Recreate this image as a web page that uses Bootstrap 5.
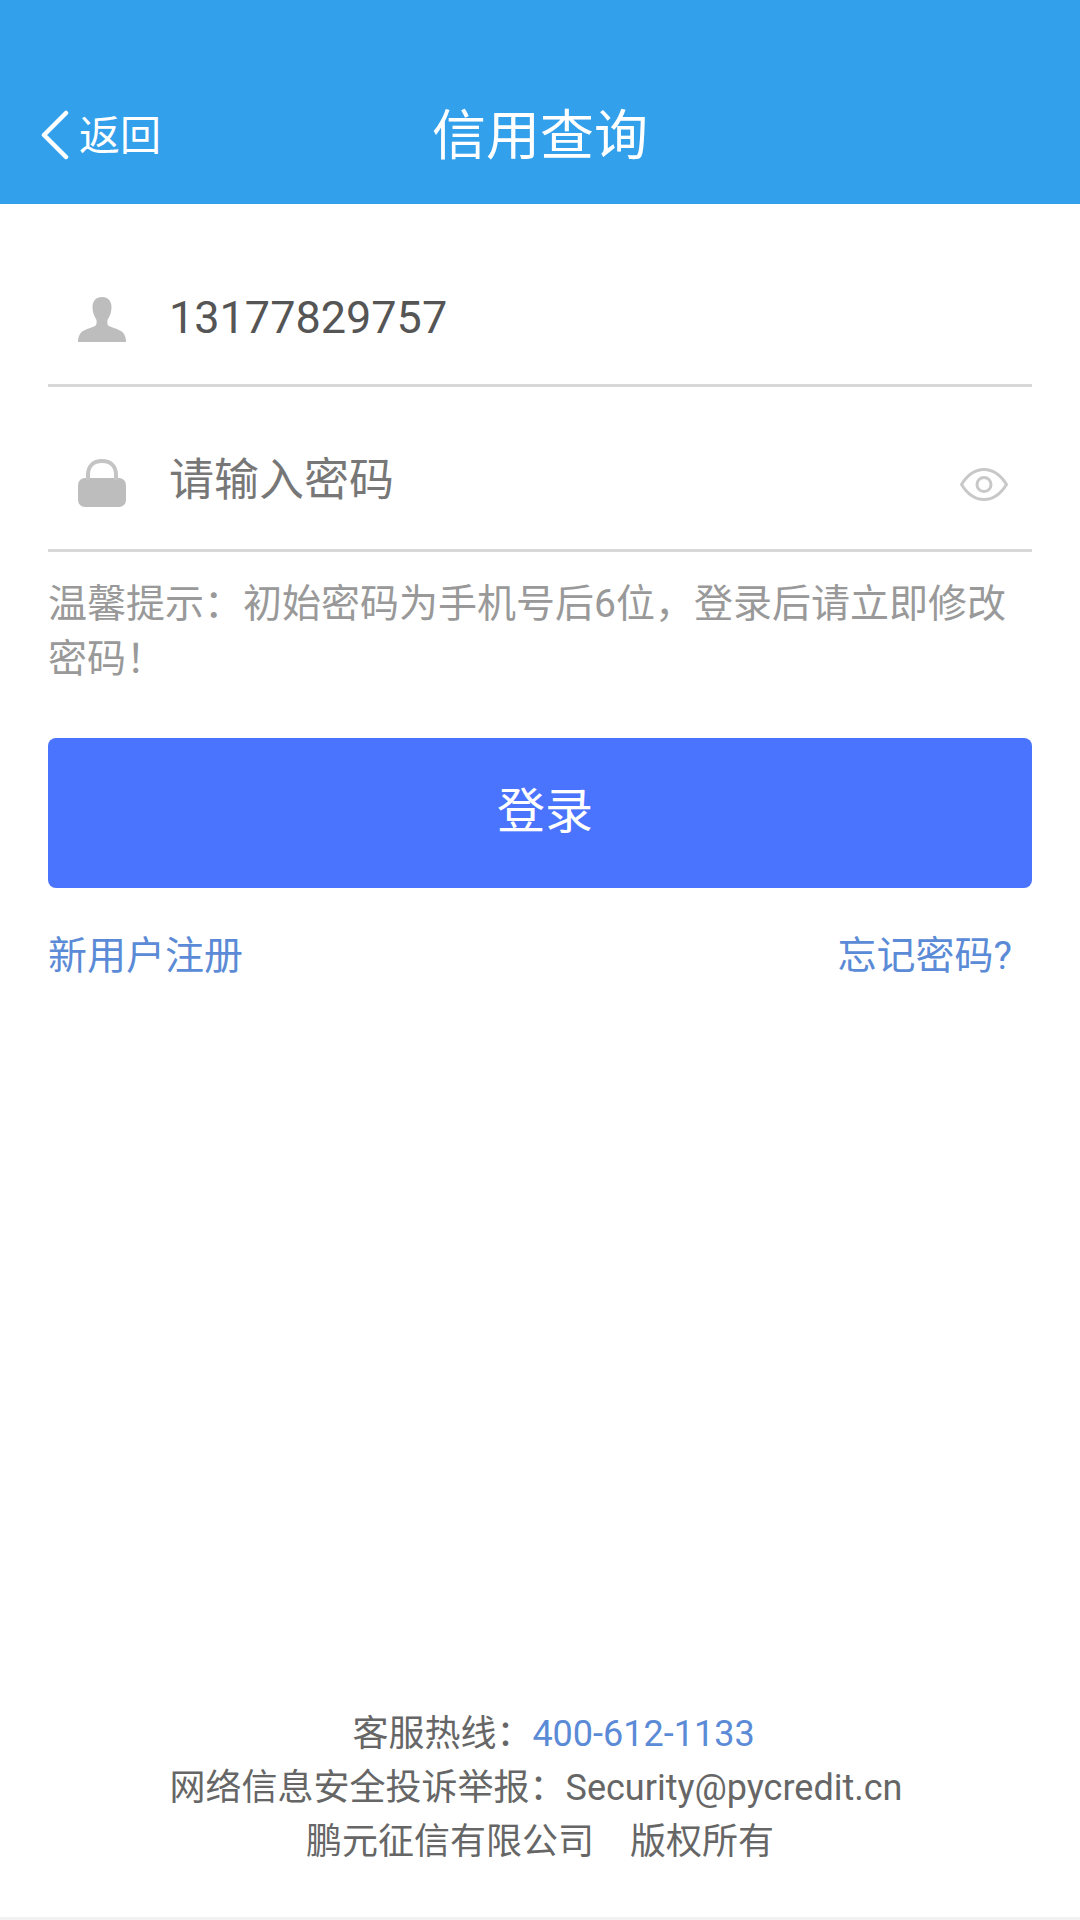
<!DOCTYPE html>
<html lang="zh-CN">
<head>
  <meta charset="UTF-8" />
  <meta name="viewport" content="width=device-width, initial-scale=1.0"/>
  <title>信用查询</title>
  <link href="https://cdn.jsdelivr.net/npm/bootstrap@5.3.0/dist/css/bootstrap.min.css" rel="stylesheet" />
  <style>
    html, body { height: 100%; }
    body {
      font-family: Roboto, "Noto Sans CJK SC", sans-serif;
      background: #fff;
      border-bottom: 3px solid #f2f2f2;
    }
    .page-wrap { height: 1917px; }
    .top-bar {
      height: 204px;
      padding-top: 98px;
      background: #33a0ec;
      color: #fff;
    }
    .back-link { left: 41px; top: 109px; gap: 10px; font-size: 41px; line-height: 50px; color: #fff; }
    .back-link span { padding-top: 2px; }
    .top-title { font-size: 54px; line-height: 78px; font-weight: 400; margin: 0; }
    .login-form { padding: 0 48px; }
    .field-row { border-bottom: 3px solid #d8d8d8; }
    .field-user { height: 121px; margin-top: 62px; padding-bottom: 15px; }
    .field-pass { height: 165px; padding-top: 26px; }
    .field-icon { width: 48px; margin: 4px 0 0 30px; flex: none; }
    .field-input {
      border: 0;
      border-radius: 0;
      padding: 0;
      margin-left: 43px;
      font-size: 45px;
      line-height: 60px;
      color: #555;
      background: transparent;
      box-shadow: none;
    }
    .field-input::placeholder { color: #777; opacity: 1; }
    .eye-icon { margin: 7px 24px 0 0; flex: none; }
    .hint-text { margin: 25px 0 0; font-size: 39px; line-height: 55px; color: #999; }
    .login-btn {
      display: block;
      width: 100%;
      height: 150px;
      margin-top: 51px;
      padding: 0 0 3px 10px;
      font-size: 48px;
      color: #fff;
      background: #4a74fd;
      border: 0;
      border-radius: 8px;
    }
    .form-links { margin-top: 40px; padding-right: 20px; font-size: 39px; line-height: 56px; }
    .form-links a, .hotline { color: #5b8ad6; text-decoration: none; }
    .page-foot { padding-bottom: 48px; font-size: 36px; line-height: 54px; color: #666; }
    .foot-hotline { padding-left: 27px; }
    .foot-report { padding-right: 8px; }
  </style>
</head>
<body>
  <div class="page-wrap d-flex flex-column">
    <header class="top-bar position-relative text-center">
      <a href="#" class="back-link position-absolute d-flex align-items-center text-decoration-none">
        <svg width="28" height="50" viewBox="0 0 28 50" fill="none" stroke="#fff" stroke-width="4.500" stroke-linecap="round" stroke-linejoin="round"><path d="M25 3 3 25l22 22"/></svg>
        <span>返回</span>
      </a>
      <h1 class="top-title">信用查询</h1>
    </header>

    <form class="login-form">
      <div class="field-row field-user d-flex align-items-center">
        <svg class="field-icon" height="45" viewBox="0 0 48 45" fill="#bdbdbd"><path d="M24 0c6 0 9.500 4 9.500 10 0 5-1.500 9-3.500 12-1 2-1 6 1 7 4 2.500 12 3 15 8 1.500 2.500 2 5 2 8H0c0-3 .5-5.500 2-8 3-5 11-5.500 15-8 2-1 2-5 1-7-2-3-3.500-7-3.500-12C14.500 4 18 0 24 0z"/></svg>
        <input class="form-control field-input" type="text" value="13177829757">
      </div>
      <div class="field-row field-pass d-flex align-items-center">
        <svg class="field-icon" height="48" viewBox="0 0 48 48" fill="#bdbdbd"><rect y="19" width="48" height="29" rx="7"/><path d="M10 21V16C10 7 15.500 2 24 2s14 5 14 14v5" fill="none" stroke="#c4c4c4" stroke-width="4"/></svg>
        <input class="form-control field-input" type="password" placeholder="请输入密码">
        <svg class="eye-icon" width="48" height="33" viewBox="0 0 48 33" fill="none" stroke="#c8c8c8" stroke-width="3"><path d="M1.500 16.500C8 6 15 1.500 24 1.500S40 6 46.500 16.500C40 27 33 31.500 24 31.500S8 27 1.500 16.500z"/><circle cx="24" cy="16.500" r="7"/></svg>
      </div>
      <p class="hint-text">温馨提示：初始密码为手机号后6位，登录后请立即修改密码！</p>
      <button type="button" class="login-btn">登录</button>
      <div class="form-links d-flex justify-content-between">
        <a href="#">新用户注册</a>
        <a href="#">忘记密码?</a>
      </div>
    </form>

    <footer class="page-foot mt-auto text-center">
      <div class="foot-hotline">客服热线：<a href="#" class="hotline">400-612-1133</a></div>
      <div class="foot-report">网络信息安全投诉举报：Security@pycredit.cn</div>
      <div>鹏元征信有限公司　版权所有</div>
    </footer>
  </div>
</body>
</html>
